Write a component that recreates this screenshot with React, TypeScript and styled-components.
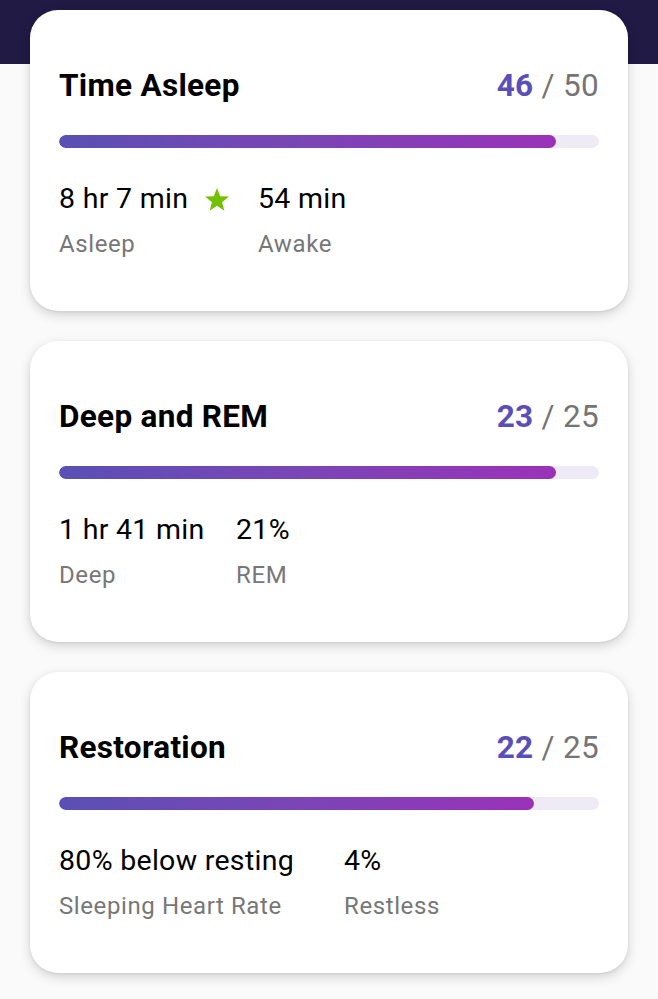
import React from "react";
import styled, { createGlobalStyle } from "styled-components";

const Global = createGlobalStyle`
  html, body { margin: 0; padding: 0; background: #fafafa; }
  body { font-family: Roboto, "Noto Sans", "Liberation Sans", sans-serif; }
`;

const Page = styled.div`
  width: 658px;
  min-height: 999px;
  background: #fafafa;
  overflow: hidden;
`;

const Header = styled.div`
  height: 64px;
  background: #201a45;
`;

const List = styled.div`
  margin-top: -54px;
  padding: 0 30px;
  display: flex;
  flex-direction: column;
  gap: 30px;
`;

const Card = styled.section`
  height: 301px;
  box-sizing: border-box;
  background: #ffffff;
  border-radius: 28px;
  box-shadow: 0 4px 12px rgba(0, 0, 0, 0.16), 0 1px 3px rgba(0, 0, 0, 0.08);
  padding: 58px 29px 0 29px;
`;

const TitleRow = styled.div`
  display: flex;
  justify-content: space-between;
  align-items: center;
  height: 36px;
`;

const Title = styled.h2`
  margin: 0;
  font-size: 31.5px;
  letter-spacing: 0.3px;
  font-weight: 700;
  color: #000000;
  line-height: 36px;
`;

const Score = styled.div`
  font-size: 31.5px;
  letter-spacing: 0.3px;
  line-height: 36px;
  color: #757575;
`;

const ScoreValue = styled.span`
  font-weight: 700;
  color: #5a4eb8;
`;

const Track = styled.div`
  margin-top: 31px;
  height: 13px;
  border-radius: 7px;
  background: #eeebf7;
  overflow: hidden;
`;

const Fill = styled.div<{ $pct: number }>`
  height: 100%;
  width: ${(p) => p.$pct}%;
  border-radius: 7px;
  background: linear-gradient(90deg, #5a50b4 0%, #7b45b6 50%, #9a32b8 100%);
`;

const Stats = styled.div`
  display: flex;
  margin-top: 35px;
`;

const Stat = styled.div<{ $w?: number }>`
  display: flex;
  flex-direction: column;
  gap: 14px;
  ${(p) => (p.$w ? `width: ${p.$w}px;` : "")}
`;

const Value = styled.div`
  display: flex;
  align-items: center;
  font-size: 28.5px;
  letter-spacing: 0.3px;
  line-height: 32px;
  color: #000000;
`;

const Label = styled.div`
  font-size: 24px;
  letter-spacing: 0.6px;
  line-height: 30px;
  color: #777777;
`;

const StarIcon = styled.svg`
  width: 26px;
  height: 26px;
  margin-left: 16px;
  fill: #74c100;
`;

const Star = () => (
  <StarIcon viewBox="0 0 24 24">
    <path d="M12 1.8l2.9 7.6 8.1.4-6.3 5.1 2.1 7.9L12 18.3l-6.8 4.5 2.1-7.9L1 9.8l8.1-.4z" />
  </StarIcon>
);

type StatItem = { value: string; label: string; star?: boolean; w?: number };

const ScoreCard = ({
  title,
  score,
  max,
  stats,
}: {
  title: string;
  score: number;
  max: number;
  stats: StatItem[];
}) => (
  <Card>
    <TitleRow>
      <Title>{title}</Title>
      <Score>
        <ScoreValue>{score}</ScoreValue> / {max}
      </Score>
    </TitleRow>
    <Track>
      <Fill $pct={(score / max) * 100} />
    </Track>
    <Stats>
      {stats.map((s) => (
        <Stat key={s.label} $w={s.w}>
          <Value>
            {s.value}
            {s.star && <Star />}
          </Value>
          <Label>{s.label}</Label>
        </Stat>
      ))}
    </Stats>
  </Card>
);

export default function App() {
  return (
    <Page>
      <Global />
      <Header />
      <List>
        <ScoreCard
          title="Time Asleep"
          score={46}
          max={50}
          stats={[
            { value: "8 hr 7 min", label: "Asleep", star: true, w: 199 },
            { value: "54 min", label: "Awake" },
          ]}
        />
        <ScoreCard
          title="Deep and REM"
          score={23}
          max={25}
          stats={[
            { value: "1 hr 41 min", label: "Deep", w: 177 },
            { value: "21%", label: "REM" },
          ]}
        />
        <ScoreCard
          title="Restoration"
          score={22}
          max={25}
          stats={[
            { value: "80% below resting", label: "Sleeping Heart Rate", w: 285 },
            { value: "4%", label: "Restless" },
          ]}
        />
      </List>
    </Page>
  );
}
